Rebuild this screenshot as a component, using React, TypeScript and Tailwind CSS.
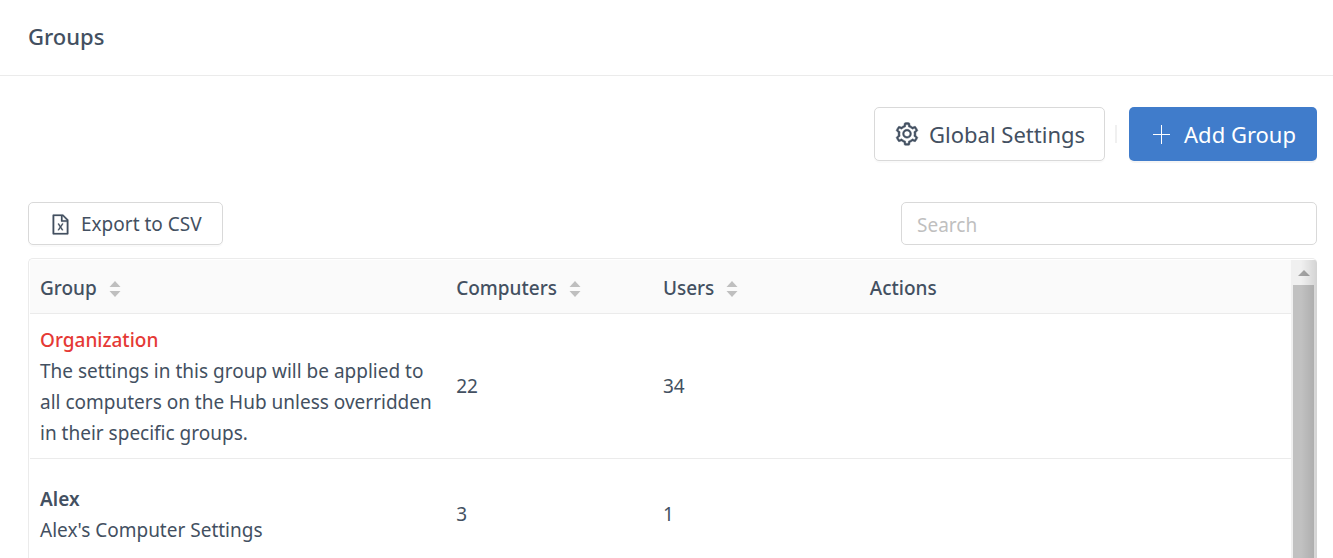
import React, { useState } from "react";
import { AiOutlineFileExcel, AiOutlineSetting } from "react-icons/ai";
import { clsx } from "clsx";

interface Group {
  name: string;
  description: string;
  computers: number;
  users: number;
  isRoot?: boolean;
}

type SortKey = "name" | "computers" | "users";

const GROUPS: Group[] = [
  {
    name: "Organization",
    description:
      "The settings in this group will be applied to all computers on the Hub unless overridden in their specific groups.",
    computers: 22,
    users: 34,
    isRoot: true,
  },
  { name: "Alex", description: "Alex's Computer Settings", computers: 3, users: 1 },
];

const COLUMNS: { key: SortKey; label: string }[] = [
  { key: "name", label: "Group" },
  { key: "computers", label: "Computers" },
  { key: "users", label: "Users" },
];

function PlusIcon() {
  return (
    <svg viewBox="0 0 24 24" className="w-6 h-6 fill-current" aria-hidden="true">
      <path d="M11 3h1v9h8v1h-8v9h-1v-9H3v-1h8z" />
    </svg>
  );
}

function SortIcon() {
  return (
    <svg viewBox="0 0 12 18" className="w-3 h-[18px] fill-[#bfbfbf]" aria-hidden="true">
      <path d="M6 1 L11.5 7 H0.5 Z" />
      <path d="M6 17 L11.5 11 H0.5 Z" />
    </svg>
  );
}

function ScrollTrack() {
  return (
    <div className="relative w-[26px] shrink-0 flex flex-col pl-0.5 bg-[#f0f0f0]" aria-hidden="true">
      <div className="h-[25px] w-[21px] flex items-center justify-center">
        <svg viewBox="0 0 12 6" className="w-3 h-1.5 fill-[#a3a3a3]">
          <path d="M6 0 L12 6 H0 Z" />
        </svg>
      </div>
      <div className="flex-1 w-[21px] bg-[#c1c1c1]" />
      <div className="absolute inset-y-0 right-0 w-4 bg-linear-to-r from-transparent to-black/12" />
    </div>
  );
}

export default function App() {
  const [query, setQuery] = useState("");
  const [sortKey, setSortKey] = useState<SortKey | null>(null);

  const rows = GROUPS.filter((g) => g.name.toLowerCase().includes(query.toLowerCase()));
  if (sortKey) {
    rows.sort((a, b) => (a[sortKey] > b[sortKey] ? 1 : -1));
  }

  return (
    <div className="h-screen overflow-hidden flex flex-col bg-white font-['Noto_Sans','Open_Sans',sans-serif] text-[#435061]">
      <header className="shrink-0 h-[76px] flex items-center px-7 pb-1 border-b border-[#ebebeb]">
        <h1 className="text-[22px] leading-8 font-medium">Groups</h1>
      </header>

      <main className="flex-1 min-h-0 flex flex-col pl-7 pr-4 pt-[31px]">
        {/* Page actions */}
        <div className="shrink-0 flex items-center justify-end">
          <button className="h-[54px] px-[19px] flex items-center gap-[9px] border border-[#d9d9d9] rounded-[5px] bg-white shadow-[0_2px_0_rgba(0,0,0,0.02)] text-[22px] cursor-pointer">
            <AiOutlineSetting className="w-[26px] h-[26px]" strokeWidth={18} />
            Global Settings
          </button>
          <div className="w-0.5 h-[18px] ml-2.5 mr-3 bg-[#f0f0f0]" />
          <button className="h-[54px] px-[21px] flex items-center gap-2.5 rounded-[5px] bg-[#407ccb] shadow-[0_2px_0_rgba(0,0,0,0.04)] text-white text-[22px] cursor-pointer">
            <PlusIcon />
            Add Group
          </button>
        </div>

        {/* Table tools */}
        <div className="shrink-0 mt-[41px] flex items-center justify-between">
          <button className="h-[43px] px-5 pt-0.5 flex items-center gap-[9px] border border-[#d9d9d9] rounded-[5px] bg-white shadow-[0_2px_0_rgba(0,0,0,0.02)] text-[19px] cursor-pointer">
            <AiOutlineFileExcel className="w-[23px] h-[23px]" strokeWidth={10} />
            Export to CSV
          </button>
          <input
            type="text"
            aria-label="Search"
            placeholder="Search"
            value={query}
            onChange={(e) => setQuery(e.target.value)}
            className="w-[416px] h-[43px] px-[15px] pt-0.5 border border-[#d9d9d9] rounded-[5px] text-[19px] placeholder:text-[#bfbfbf] focus:outline-none"
          />
        </div>

        <div className="flex-1 min-h-0 mt-[13px] flex overflow-hidden border-t border-l border-[#ebebeb] rounded-t-[5px] pt-px pl-px">
          <div className="flex-1 min-w-0">
            <table className="w-full table-fixed border-separate border-spacing-0 text-left text-[19px] leading-[31px]">
              <colgroup>
                <col className="w-[33%]" />
                <col className="w-[16.4%]" />
                <col className="w-[16.4%]" />
                <col />
              </colgroup>
              <thead>
                <tr className="h-[54px] bg-[#fafafa]">
                  {COLUMNS.map((col) => (
                    <th key={col.key} className="px-2.5 pt-1 font-medium border-b border-[#ebebeb]">
                      <button onClick={() => setSortKey(col.key)} className="flex items-center gap-3 cursor-pointer">
                        {col.label}
                        <SortIcon />
                      </button>
                    </th>
                  ))}
                  <th className="px-2.5 pt-1 font-medium border-b border-[#ebebeb]">Actions</th>
                </tr>
              </thead>
              <tbody>
                {rows.map((group) => (
                  <tr key={group.name} className="h-[111px]">
                    <td className="px-2.5 pt-[11px] pb-[9px] border-b border-[#ebebeb]">
                      <div className={clsx(group.isRoot ? "font-medium text-[#e53935]" : "font-semibold")}>
                        {group.name}
                      </div>
                      <div>{group.description}</div>
                    </td>
                    <td className="px-2.5 border-b border-[#ebebeb]">{group.computers}</td>
                    <td className="px-2.5 border-b border-[#ebebeb]">{group.users}</td>
                    <td className="px-2.5 border-b border-[#ebebeb]" />
                  </tr>
                ))}
              </tbody>
            </table>
          </div>
          <ScrollTrack />
        </div>
      </main>
    </div>
  );
}
